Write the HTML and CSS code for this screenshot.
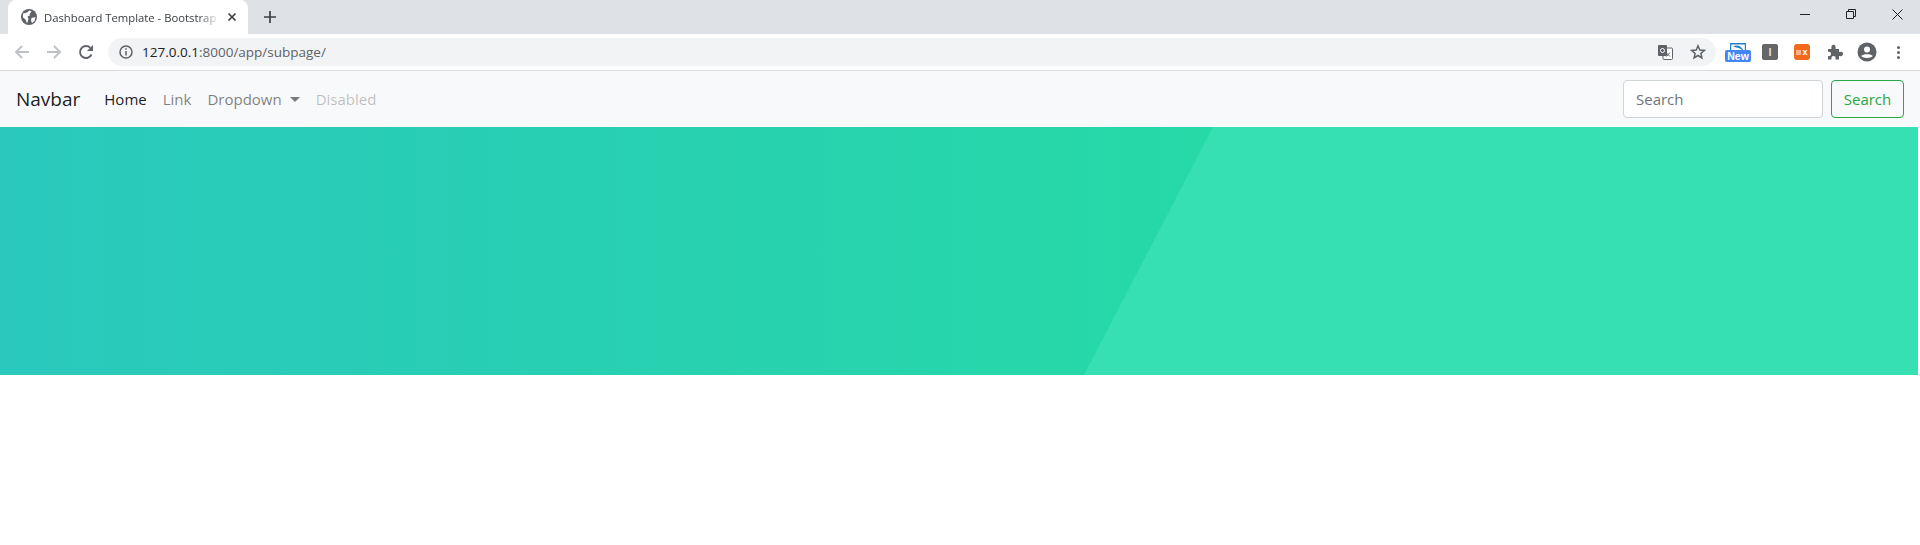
FILE: index.html
```html
<!DOCTYPE html>
<html lang="en">
<head>
  <meta charset="UTF-8">
  <title>Dashboard Template - Bootstrap</title>
  <link rel="stylesheet" href="styles.css">
</head>
<body>
  <div class="tabstrip">
    <div class="tab">
      <svg class="tab-globe" width="16" height="16" viewBox="0 0 16 16"><circle cx="8" cy="8" r="8" fill="#5f6368"/><path d="M2 4.500 6 3.500 8.500 1.500 10.500 2.500 8.500 5 9 6.500 6.500 7.500 7.500 10 6 14.500 4.500 10.500 2 8.500ZM10.500 9 14.500 8 13.500 12 11 14 10 11.500Z" fill="#fff"/></svg>
      <span class="tab-title">Dashboard Template - Bootstrap</span>
      <svg class="tab-close" width="10" height="10" viewBox="0 0 10 10"><path d="M1.500 1.500 8.500 8.500M8.500 1.500 1.500 8.500" stroke="#3c4043" stroke-width="1.700"/></svg>
    </div>
    <svg class="new-tab" width="12" height="12" viewBox="0 0 12 12"><path d="M6 0V12M0 6H12" stroke="#3c4043" stroke-width="1.700"/></svg>
    <div class="window-btns">
      <svg width="10" height="10" viewBox="0 0 10 10"><path d="M0 5.500H10" stroke="#222" stroke-width="1"/></svg>
      <svg width="10" height="10" viewBox="0 0 10 10"><path d="M.5 2.500H7.500V9.500H.5ZM2.500 2.500V.5H9.500V7.500H7.500" fill="none" stroke="#222"/></svg>
      <svg width="11" height="11" viewBox="0 0 11 11"><path d="M.5 .5 10.500 10.500M10.500 .5 .5 10.500" stroke="#222"/></svg>
    </div>
  </div>

  <div class="toolbar">
    <svg class="tool-icon" width="16" height="16" viewBox="0 0 16 16"><path d="M15 8H2M8 2 2 8 8 14" fill="none" stroke="#bdc1c6" stroke-width="1.800"/></svg>
    <svg class="tool-icon" width="16" height="16" viewBox="0 0 16 16"><path d="M1 8H14M8 2 14 8 8 14" fill="none" stroke="#bdc1c6" stroke-width="1.800"/></svg>
    <svg class="tool-icon" width="16" height="16" viewBox="0 0 16 16"><path d="M13.500 10.500A6 6 0 1 1 12.300 3.800" fill="none" stroke="#5f6368" stroke-width="1.900"/><path d="M15 1V7H9Z" fill="#5f6368"/></svg>
    <div class="omnibox">
      <svg class="info-icon" width="14" height="14" viewBox="0 0 14 14"><circle cx="7" cy="7" r="6" fill="none" stroke="#5f6368" stroke-width="1.500"/><path d="M7 6V10.500M7 3.300V4.800" stroke="#5f6368" stroke-width="1.500"/></svg>
      <span class="url"><span class="url-host">127.0.0.1</span>:8000/app/subpage/</span>
      <svg class="omni-translate" width="15" height="15" viewBox="0 0 15 15"><rect x="5" y="3" width="9.500" height="11.500" rx="1" fill="#fff" stroke="#5f6368"/><rect x="0" y="0" width="9" height="11" rx="1" fill="#5f6368"/><circle cx="4.500" cy="5.500" r="2" fill="none" stroke="#fff"/><path d="M8 7.500 12 11.500M12 7.500 8.500 11.500" stroke="#5f6368"/></svg>
      <svg class="omni-star" width="16" height="16" viewBox="0 0 16 16"><path d="M8 1.800 9.800 6 14.300 6.400 10.900 9.400 11.900 13.900 8 11.500 4.100 13.900 5.100 9.400 1.700 6.400 6.200 6Z" fill="none" stroke="#5f6368" stroke-width="1.500"/></svg>
    </div>
    <div class="ext-new">
      <svg width="16" height="8" viewBox="0 0 16 8"><path d="M.5 8V.8H15.500V8" fill="none" stroke="#2a7fc4" stroke-width="1.400"/><path d="M3 3.500C7 1.500 11 2.500 14 8L10 5.500C8 4.500 5 4.500 3 3.500Z" fill="#2a7fc4"/></svg>
      <span class="ext-new-badge">New</span>
    </div>
    <span class="ext-gray">I</span>
    <span class="ext-orange"><span class="ext-orange-box"></span>x</span>
    <svg class="ext-puzzle" width="16" height="16" viewBox="0 0 16 16"><path d="M1 5H4.500C4 2 5 .8 6.500 .8S9 2 8.500 5H12V8C15 7.500 16 8.500 16 10S15 12.500 12 12V15.500H8.500C9 13 8 12 6.500 12S4 13 4.500 15.500H1V12C3 12.500 4 11.500 4 10S3 7.500 1 8Z" fill="#5f6368"/></svg>
    <svg class="ext-avatar" width="20" height="20" viewBox="0 0 20 20"><circle cx="10" cy="10" r="9.500" fill="#5f6368"/><circle cx="10" cy="7.500" r="3" fill="#fff"/><path d="M4.200 14C6 11.600 14 11.600 15.800 14 14 16.500 6 16.500 4.200 14Z" fill="#fff"/></svg>
    <div class="kebab"><i></i><i></i><i></i></div>
  </div>

  <nav class="navbar">
    <a class="navbar-brand" href="#">Navbar</a>
    <ul class="navbar-nav">
      <li><a class="nav-link active" href="#">Home</a></li>
      <li><a class="nav-link" href="#">Link</a></li>
      <li><a class="nav-link dropdown-toggle" href="#">Dropdown</a></li>
      <li><a class="nav-link disabled" href="#">Disabled</a></li>
    </ul>
    <form class="search-form">
      <input class="form-control" type="search" placeholder="Search">
      <button class="btn-search" type="button">Search</button>
    </form>
  </nav>

  <section class="hero"></section>
</body>
</html>
```

FILE: styles.css
```css
* {
  box-sizing: border-box;
}
body {
  margin: 0;
  background: #fff;
  font-family: "Open Sans", "Noto Sans", "Liberation Sans", sans-serif;
  overflow: hidden;
}
.tabstrip {
  display: flex;
  align-items: flex-end;
  height: 34px;
  background: #dee1e6;
}
.tab {
  display: flex;
  align-items: center;
  width: 240px;
  height: 34px;
  margin-left: 8px;
  padding: 0 11px 0 13px;
  background: #fff;
  border-radius: 8px 8px 0 0;
}
.tab-globe {
  flex: none;
}
.tab-title {
  flex: 1;
  margin-left: 7px;
  overflow: hidden;
  white-space: nowrap;
  font-size: 11.300px;
  color: #3c4043;
  -webkit-mask-image: linear-gradient(to right, #000 88%, transparent 100%);
  mask-image: linear-gradient(to right, #000 88%, transparent 100%);
}
.tab-close {
  flex: none;
  margin-left: 7px;
}
.new-tab {
  align-self: center;
  margin-left: 16px;
}
.window-btns {
  display: flex;
  align-items: center;
  gap: 36px;
  align-self: flex-start;
  height: 28px;
  margin-left: auto;
  padding-right: 17px;
}
.toolbar {
  display: flex;
  align-items: center;
  height: 37px;
  padding-left: 14px;
  background: #fff;
  border-bottom: 1px solid #d9dbde;
}
.tool-icon {
  flex: none;
  margin-right: 16px;
}
.omnibox {
  display: flex;
  align-items: center;
  width: 1608px;
  height: 28px;
  margin-left: -2px;
  padding: 0 10px 0 11px;
  background: #f1f3f4;
  border-radius: 14px;
}
.url {
  margin-left: 9px;
  font-size: 13.500px;
  color: #5f6368;
}
.url-host {
  color: #202124;
}
.omni-translate {
  margin-left: auto;
}
.omni-star {
  margin-left: 17px;
}
.ext-new {
  display: flex;
  flex-direction: column;
  align-items: center;
  width: 26px;
  margin-left: 9px;
}
.ext-new-badge {
  width: 26px;
  height: 12px;
  margin-top: -1px;
  background: #4285f4;
  border-radius: 2px;
  color: #fff;
  font-family: "Liberation Sans", sans-serif;
  font-size: 10.500px;
  font-weight: 700;
  line-height: 12px;
  text-align: center;
}
.ext-gray {
  width: 16px;
  height: 16px;
  margin-left: 11px;
  background: #666;
  border-radius: 2px;
  color: #ddd;
  font-family: "Liberation Sans", sans-serif;
  font-size: 11px;
  font-weight: 700;
  line-height: 16px;
  text-align: center;
}
.ext-orange {
  display: flex;
  align-items: center;
  justify-content: center;
  gap: 1px;
  width: 16px;
  height: 16px;
  margin-left: 16px;
  background: #f26b1d;
  border-radius: 3px;
  color: #fff;
  font-family: "Liberation Sans", sans-serif;
  font-size: 9px;
  font-weight: 700;
}
.ext-orange-box {
  width: 5px;
  height: 5px;
  background: #f7b48c;
}
.ext-puzzle {
  margin-left: 17px;
}
.ext-avatar {
  margin-left: 14px;
}
.kebab {
  display: flex;
  flex-direction: column;
  gap: 2px;
  margin-left: 20px;
}
.kebab i {
  display: block;
  width: 3px;
  height: 3px;
  background: #5f6368;
  border-radius: 50%;
}
.navbar {
  display: flex;
  align-items: center;
  height: 56px;
  padding: 0 16px;
  background: #f8f9fa;
}
.navbar-brand {
  margin-right: 16px;
  font-size: 19px;
  color: rgba(0, 0, 0, .9);
  text-decoration: none;
}
.navbar-nav {
  display: flex;
  margin: 0;
  padding: 0;
  list-style: none;
}
.nav-link {
  display: block;
  padding: 8px;
  font-size: 15px;
  color: rgba(0, 0, 0, .5);
  text-decoration: none;
}
.nav-link.active {
  color: rgba(0, 0, 0, .9);
}
.nav-link.disabled {
  color: rgba(0, 0, 0, .25);
}
.dropdown-toggle::after {
  content: "";
  display: inline-block;
  margin-left: 8px;
  vertical-align: 3px;
  border-top: 5px solid;
  border-right: 5px solid transparent;
  border-left: 5px solid transparent;
}
.search-form {
  display: flex;
  gap: 8px;
  margin-left: auto;
}
.form-control {
  width: 200px;
  height: 38px;
  padding: 6px 12px;
  background: #fff;
  border: 1px solid #ced4da;
  border-radius: 4px;
  font-family: inherit;
  font-size: 15px;
}
.form-control::placeholder {
  color: #6c757d;
}
.btn-search {
  width: 73px;
  height: 38px;
  padding: 0;
  background: transparent;
  border: 1px solid #28a745;
  border-radius: 4px;
  color: #28a745;
  font-family: inherit;
  font-size: 15px;
}
.hero {
  position: relative;
  width: 1918px;
  height: 248px;
  background: linear-gradient(90deg, #2ac8bd 0%, #26d9a7 63%);
}
.hero::after {
  content: "";
  position: absolute;
  inset: 0;
  background: #37e0b2;
  clip-path: polygon(1213px 0, 100% 0, 100% 100%, 1084px 100%);
}
```
